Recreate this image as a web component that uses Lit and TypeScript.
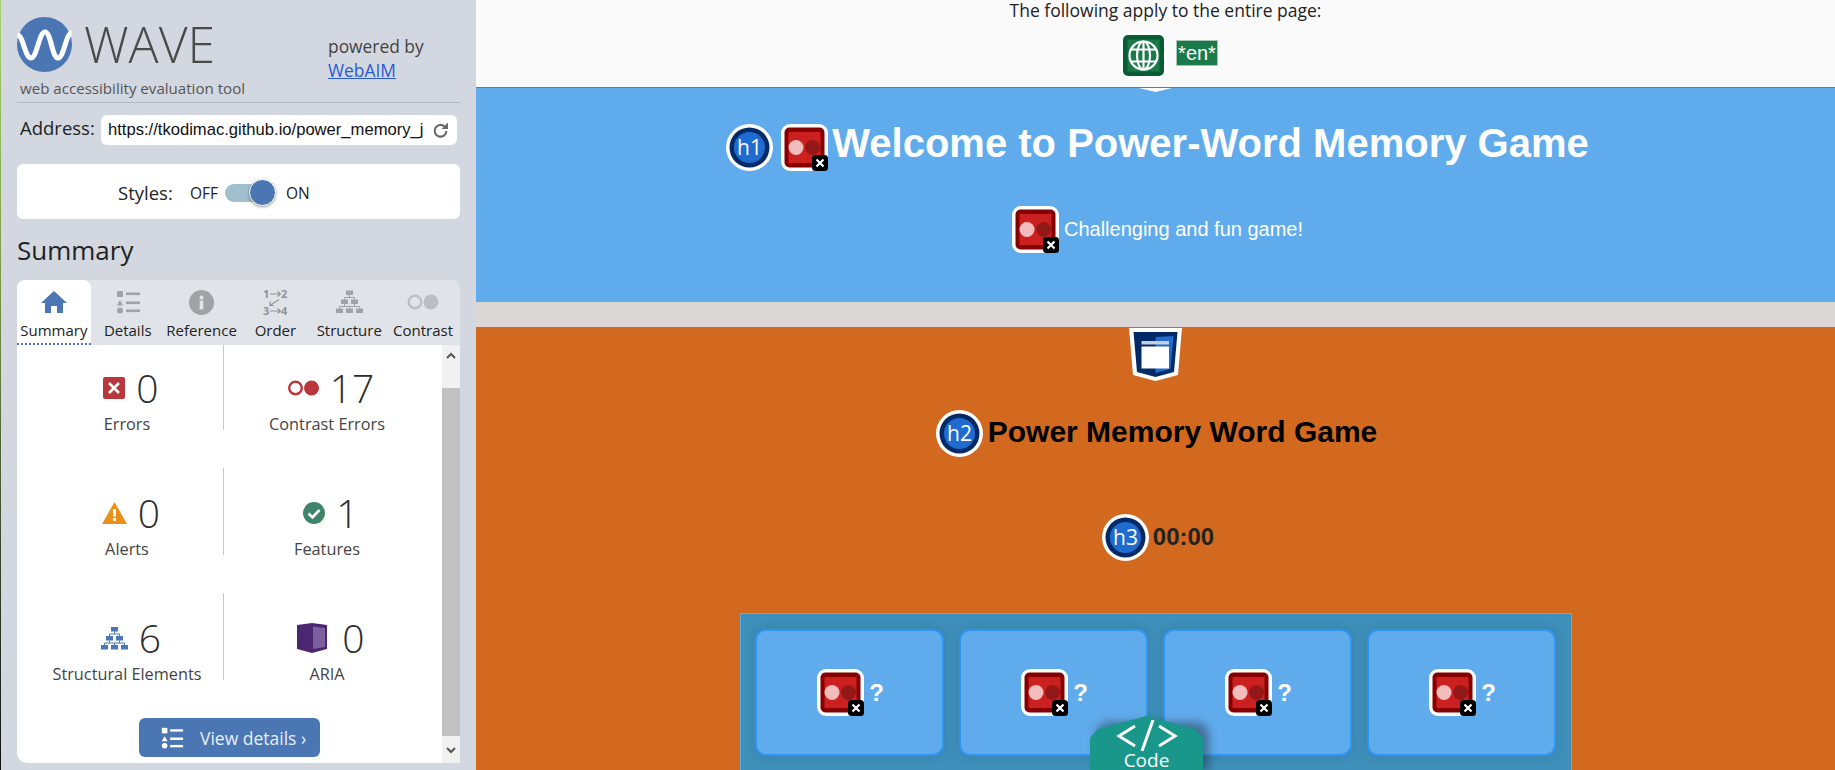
import { LitElement, html, css, svg } from 'lit';
import { customElement } from 'lit/decorators.js';

const redIcon = html`<svg class="wi" width="47" height="47" viewBox="0 0 47 47">
  <rect width="47" height="47" rx="9" fill="#fff"/>
  <rect x="3.5" y="3.5" width="40" height="40" rx="5" fill="#870000"/>
  <rect x="7.5" y="8" width="32" height="31" fill="#cc2020"/>
  <circle cx="15" cy="23.5" r="7.5" fill="#f0bcbc"/>
  <circle cx="31.5" cy="23.5" r="7.5" fill="#941818"/>
  <rect x="31" y="31" width="16" height="16" rx="3.5" fill="#000"/>
  <path d="M35.5 35.5l7 7M42.5 35.5l-7 7" stroke="#fff" stroke-width="2.2"/>
</svg>`;

const headingIcon = (label: string) => html`<svg class="wi" width="47" height="47" viewBox="0 0 47 47">
  <circle cx="23.5" cy="23.5" r="23.5" fill="#fff"/>
  <circle cx="23.5" cy="23.5" r="20" fill="#022a66"/>
  <circle cx="23.5" cy="23.5" r="15.5" fill="#1f6bd0"/>
  <text x="23.5" y="31" text-anchor="middle" font-family="Open Sans" font-size="21" fill="#fff">${label}</text>
</svg>`;

const structureIcon = (c: string) => svg`
  <rect x="10" y="0" width="7" height="4.5" fill="${c}"/>
  <rect x="5" y="9" width="7" height="4.5" fill="${c}"/>
  <rect x="15" y="9" width="7" height="4.5" fill="${c}"/>
  <rect x="0" y="18" width="7" height="4.5" fill="${c}"/>
  <rect x="10" y="18" width="7" height="4.5" fill="${c}"/>
  <rect x="20" y="18" width="7" height="4.5" fill="${c}"/>
  <path d="M13.5 4v3M8.5 9V7h10v2M8.5 13.5V16M18.5 13.5V16M3.5 18v-2h20v2M13.5 16v2" stroke="${c}" stroke-width="1" fill="none"/>`;

const listIcon = (c: string) => svg`
  <rect x="2" y="1" width="6" height="6" fill="${c}"/>
  <path d="M5 10l3.2 5.5H1.8z" fill="${c}"/>
  <circle cx="5" cy="20.5" r="3" fill="${c}"/>
  <rect x="11" y="2.5" width="14" height="2.6" fill="${c}"/>
  <rect x="11" y="11.5" width="14" height="2.6" fill="${c}"/>
  <rect x="11" y="19.5" width="14" height="2.6" fill="${c}"/>`;

const tabs = [
  { label: 'Summary', active: true, icon: html`<svg width="26" height="22" viewBox="0 0 26 22"><path d="M13 0L26 12h-4v10h-6v-7h-6v7H4V12H0z" fill="#4a76b4"/></svg>` },
  { label: 'Details', icon: html`<svg width="26" height="24" viewBox="0 0 26 24">${listIcon('#a0a3a6')}</svg>` },
  { label: 'Reference', icon: html`<svg width="25" height="25" viewBox="0 0 25 25"><circle cx="12.5" cy="12.5" r="12.5" fill="#a0a3a6"/><circle cx="12.5" cy="7.5" r="2" fill="#e0e3e8"/><rect x="10.7" y="10.5" width="3.6" height="9" fill="#e0e3e8"/></svg>` },
  { label: 'Order', icon: html`<svg width="32" height="30" viewBox="0 0 32 30"><g font-family="Open Sans" font-size="11" font-weight="700" fill="#8f9296"><text x="4" y="11">1</text><text x="22" y="11">2</text><text x="4" y="28">3</text><text x="22" y="28">4</text></g><path d="M11 7h10M18.500 4.500L21.500 7l-3 2.500M11 24h10M18.500 21.500L21.500 24l-3 2.500M20 12.500l-9 6M11 14.500V18.500h4" stroke="#8f9296" stroke-width="1.100" fill="none"/></svg>` },
  { label: 'Structure', icon: html`<svg width="27" height="24" viewBox="0 0 27 23">${structureIcon('#a0a3a6')}</svg>` },
  { label: 'Contrast', icon: html`<svg width="32" height="16" viewBox="0 0 32 16"><circle cx="8" cy="8" r="6.300" fill="none" stroke="#bcbfc2" stroke-width="2.400"/><circle cx="24" cy="8" r="7.500" fill="#bcbfc2"/></svg>` },
];

const stats = [
  { n: '0', label: 'Errors', icon: html`<svg width="22" height="22" viewBox="0 0 22 22"><rect width="22" height="22" rx="2" fill="#b9363b"/><path d="M6 6l10 10M16 6L6 16" stroke="#fff" stroke-width="2.600"/></svg>` },
  { n: '17', label: 'Contrast Errors', icon: html`<svg width="31" height="16" viewBox="0 0 31 16"><circle cx="7.500" cy="8" r="6.300" fill="none" stroke="#b9363b" stroke-width="2.400"/><circle cx="23.500" cy="8" r="7.500" fill="#b9363b"/></svg>` },
  { n: '0', label: 'Alerts', icon: html`<svg width="25" height="22" viewBox="0 0 25 22"><path d="M12.500 0L25 22H0z" fill="#e8901a"/><rect x="11" y="7" width="3" height="7.500" fill="#fff"/><rect x="11" y="16" width="3" height="3" fill="#fff"/></svg>` },
  { n: '1', label: 'Features', icon: html`<svg width="22" height="22" viewBox="0 0 22 22"><circle cx="11" cy="11" r="11" fill="#3f8468"/><path d="M5.500 11.500l4 4 7-7.500" stroke="#fff" stroke-width="2.600" fill="none"/></svg>` },
  { n: '6', label: 'Structural Elements', icon: html`<svg width="27" height="23" viewBox="0 0 27 23">${structureIcon('#4a76b4')}</svg>` },
  { n: '0', label: 'ARIA', icon: html`<svg width="34" height="30" viewBox="0 0 34 30"><path d="M0 2l15-2 15 2v24l-15 4-15-4z" fill="#4a2770"/><path d="M16 3.500l12 1.500v19l-12 2z" fill="#7d5fa0"/></svg>` },
];

const cards = [0, 1, 2, 3];

@customElement('app-root')
export class AppRoot extends LitElement {
  static styles = css`
    :host {
      display: flex;
      width: 1835px;
      height: 770px;
      overflow: hidden;
      position: relative;
      font-family: "Open Sans", sans-serif;
    }
    .edge {
      width: 1px;
      flex: none;
      background: linear-gradient(#a5d56a, #7a9c48 35%, #3c4a30 70%, #111);
    }
    .side {
      width: 475px;
      flex: none;
      background: #d3d8e0;
      padding: 0 16px;
      box-sizing: border-box;
    }
    .brand {
      height: 102px;
      display: flex;
      border-bottom: 1px solid #b5b8bc;
      box-sizing: content-box;
      position: relative;
    }
    .logo-col { width: 311px; padding-top: 17px; }
    .logo-row { display: flex; align-items: center; gap: 12px; height: 55px; }
    .wave-word {
      font-size: 50px;
      font-weight: 300;
      color: #4a4a4a;
      line-height: 55px;
    }
    .tagline { font-size: 15.100px; color: #555; margin: 6px 0 0 3px; line-height: 20px; }
    .powered { padding-top: 34px; font-size: 17.400px; line-height: 24px; color: #444; }
    .powered a { color: #2a5bd0; text-decoration: underline; display: block; }
    .address { display: flex; align-items: center; height: 30px; margin-top: 12px; padding-left: 3px; }
    .address label { font-size: 18.500px; color: #222; width: 81px; line-height: 26px; padding-bottom: 4px; white-space: nowrap; }
    .url {
      width: 356px;
      height: 30px;
      background: #fff;
      border-radius: 6px;
      display: flex;
      align-items: center;
      justify-content: space-between;
      padding: 0 8px 0 7px;
      box-sizing: border-box;
    }
    .url span {
      font: 16.600px/20px "Liberation Sans", sans-serif;
      color: #111;
      width: 315px;
      overflow: hidden;
      white-space: nowrap;
      padding-bottom: 1px;
    }
    .styles {
      height: 55px;
      margin-top: 19px;
      background: #fff;
      border-radius: 6px;
      display: flex;
      align-items: center;
      padding: 2px 0 0 101px;
      box-sizing: border-box;
      color: #222;
    }
    .styles b { font-weight: 400; font-size: 18.500px; width: 72px; }
    .styles small { font-size: 15.500px; }
    .track {
      width: 40px;
      height: 18px;
      border-radius: 9px;
      background: #9fc0cc;
      margin: 0 21px 0 7px;
      position: relative;
    }
    .knob {
      position: absolute;
      right: -11px;
      top: -4.500px;
      width: 25px;
      height: 25px;
      border-radius: 50%;
      background: #4a76b4;
      border: 1px solid #fff;
      box-shadow: 0 1px 3px rgba(0, 0, 0, 0.4);
    }
    h2 {
      font-size: 26px;
      font-weight: 400;
      color: #222;
      margin: 0;
      height: 61px;
      line-height: 62px;
    }
    .tabs {
      height: 65px;
      display: grid;
      grid-template-columns: repeat(6, 1fr);
      background: #e0e3e8;
      border-radius: 8px 8px 0 0;
    }
    .tab {
      display: flex;
      flex-direction: column;
      align-items: center;
      font-size: 15px;
      color: #222;
      box-sizing: border-box;
      border-radius: 8px 8px 0 0;
    }
    .tab.active { background: #fff; border-bottom: 2px dotted #4a76b4; }
    .tab-icon { height: 40px; display: flex; align-items: center; justify-content: center; padding-top: 4px; box-sizing: border-box; }
    .tab-label { line-height: 20px; white-space: nowrap; }
    .panel {
      height: 418px;
      background: #fff;
      border-radius: 0 0 0 10px;
      display: flex;
      overflow: hidden;
    }
    .panel-main { width: 425px; display: flex; flex-direction: column; }
    .stats {
      display: grid;
      grid-template-columns: 207px 218px;
      grid-auto-rows: 87px;
      row-gap: 38px;
      margin-top: -2px;
    }
    .stat { display: flex; flex-direction: column; align-items: center; padding-top: 20px; box-sizing: border-box; }
    .stat:nth-child(odd) { border-right: 1px solid #c8c8c8; padding-left: 14px; }
    .stat:nth-child(even) { padding-right: 12px; }
    .stat-top { display: flex; align-items: center; gap: 11px; height: 50px; padding-left: 8px; }
    .num { font-size: 39px; font-weight: 300; color: #2c2c2c; line-height: 50px; }
    .stat-label { font-size: 16.300px; color: #444; line-height: 22px; white-space: nowrap; }
    .view {
      align-self: flex-start;
      margin: 38px 0 0 122px;
      width: 181px;
      height: 39px;
      background: #4a76b4;
      border-radius: 6px;
      color: #e8eef6;
      font-size: 17.500px;
      display: flex;
      align-items: center;
      padding-left: 21px;
      gap: 16px;
      box-sizing: border-box;
    }
    .scroll { width: 18px; display: flex; flex-direction: column; background: #f1f1f1; }
    .scroll-btn { height: 43px; display: flex; justify-content: center; padding-top: 7px; box-sizing: border-box; }
    .scroll-btn.down { height: 27px; padding-top: 11px; }
    .thumb { flex: 1; background: #c1c1c1; }
    .page { flex: 1; display: flex; flex-direction: column; min-width: 0; }
    .apply {
      height: 87px;
      background: #fafafa;
      border-bottom: 1px solid #777;
      display: flex;
      flex-direction: column;
      align-items: center;
      font-size: 17.500px;
      color: #222;
      line-height: 21px;
      flex: none;
      padding-left: 20px;
    }
    .apply-row { display: flex; align-items: center; gap: 9px; margin-top: 11px; padding-left: 7px; }
    .lang {
      background: #1a7a4a;
      border: 1px solid #a9c6b5;
      color: #fff;
      font: 20px/24px "Liberation Sans", sans-serif;
      padding: 0 1px;
      margin-bottom: 6px;
    }
    .hero {
      height: 214px;
      flex: none;
      background: #60abeb;
      display: flex;
      flex-direction: column;
      align-items: center;
      position: relative;
      color: #fff;
      font-family: "Liberation Sans", sans-serif;
    }
    .notch {
      position: absolute;
      top: 0;
      left: 663px;
      width: 33px;
      height: 4px;
      background: #fff;
      clip-path: polygon(0 0, 100% 0, 50% 100%);
    }
    .row { display: flex; align-items: center; }
    .wi { flex: none; }
    h1 { margin: 0 0 0 -4px; font-size: 40px; font-weight: 700; line-height: 38px; padding-bottom: 9px; }
    .h1-row { margin-top: 36px; padding-left: 4px; gap: 8px; }
    .sub-row { margin-top: 35px; font-size: 20px; gap: 5px; padding-left: 4px; }
    .gap { height: 25px; flex: none; background: #dcd7d7; }
    .game {
      flex: 1;
      background: #d2691e;
      display: flex;
      flex-direction: column;
      align-items: center;
      font-family: "Liberation Sans", sans-serif;
      min-height: 0;
    }
    .landmark { margin-top: 1px; flex: none; }
    .game h3 { margin: 0; font-size: 30px; font-weight: 700; color: #000; line-height: 34px; padding-bottom: 4px; }
    .h2-row { margin-top: 29px; gap: 5px; padding-left: 2px; }
    .h3-row { margin-top: 57px; gap: 4px; padding-left: 5px; }
    .timer { font-size: 24px; font-weight: 700; color: #222; line-height: 28px; padding-bottom: 2px; }
    .board {
      margin-top: 52px;
      width: 832px;
      flex: 1;
      min-height: 0;
      box-sizing: border-box;
      background: #3e8fb9;
      border: 1px solid #60abeb;
      border-bottom: 0;
      padding: 15px 14px 0;
      display: grid;
      grid-template-columns: repeat(4, 189px);
      column-gap: 15px;
      align-content: start;
    }
    .card {
      height: 127px;
      box-sizing: border-box;
      background: #60abeb;
      border: 2px solid #2e96f0;
      border-radius: 11px;
      display: flex;
      align-items: center;
      justify-content: center;
      gap: 5px;
      color: #fff;
      font-size: 24px;
      font-weight: 700;
      padding-left: 3px;
      box-shadow: 0 0 8px rgba(40, 100, 150, 0.35);
    }
    .code {
      position: absolute;
      left: 1090px;
      top: 716px;
      width: 113px;
      height: 54px;
      background: #18978a;
      clip-path: polygon(50% 0, 93% 13px, 100% 22px, 100% 100%, 0 100%, 0 22px, 7% 13px);
      color: #fff;
      text-align: center;
      font-size: 19px;
    }
    .code-shadow {
      position: absolute;
      left: 1096px;
      top: 722px;
      width: 113px;
      height: 48px;
      background: rgba(30, 40, 50, 0.45);
      filter: blur(4px);
      border-radius: 14px 14px 0 0;
    }
    .code svg { display: block; margin: 4px auto 0; }
    .code span { display: block; line-height: 19px; }
  `;

  render() {
    return html`
      <div class="edge"></div>
      <aside class="side">
        <div class="brand">
          <div class="logo-col">
            <div class="logo-row">
              <svg width="55" height="55" viewBox="0 0 55 55">
                <circle cx="27.500" cy="27.500" r="27.500" fill="#4a76b4"/>
                <path d="M0.500 18C6 18 8 41 14 41S22 15 28 15S35 41 41 41S49 16 54.500 16" fill="none" stroke="#fff" stroke-width="5"/>
              </svg>
              <span class="wave-word">WAVE</span>
            </div>
            <div class="tagline">web accessibility evaluation tool</div>
          </div>
          <div class="powered">powered by<a>WebAIM</a></div>
        </div>
        <div class="address">
          <label>Address:</label>
          <div class="url">
            <span>https://tkodimac.github.io/power_memory_j</span>
            <svg width="17" height="17" viewBox="0 0 16 16"><path d="M13.500 8.500a5.500 5.500 0 1 1-1.800-4.300" fill="none" stroke="#666" stroke-width="2"/><path d="M15 0.500v6h-6z" fill="#666"/></svg>
          </div>
        </div>
        <div class="styles">
          <b>Styles:</b><small>OFF</small>
          <div class="track"><div class="knob"></div></div>
          <small>ON</small>
        </div>
        <h2>Summary</h2>
        <div class="tabs">
          ${tabs.map(t => html`
            <div class="tab ${t.active ? 'active' : ''}">
              <div class="tab-icon">${t.icon}</div>
              <div class="tab-label">${t.label}</div>
            </div>
          `)}
        </div>
        <div class="panel">
          <div class="panel-main">
            <div class="stats">
              ${stats.map(s => html`
                <div class="stat">
                  <div class="stat-top">${s.icon}<span class="num">${s.n}</span></div>
                  <div class="stat-label">${s.label}</div>
                </div>
              `)}
            </div>
            <div class="view">
              <svg width="24" height="24" viewBox="0 0 26 24">${listIcon('#fff')}</svg>
              <span>View details ›</span>
            </div>
          </div>
          <div class="scroll">
            <div class="scroll-btn"><svg width="10" height="7" viewBox="0 0 10 7"><path d="M1 6l4-4 4 4" fill="none" stroke="#555" stroke-width="2"/></svg></div>
            <div class="thumb"></div>
            <div class="scroll-btn down"><svg width="10" height="7" viewBox="0 0 10 7"><path d="M1 1l4 4 4-4" fill="none" stroke="#555" stroke-width="2"/></svg></div>
          </div>
        </div>
      </aside>
      <main class="page">
        <div class="apply">
          <div>The following apply to the entire page:</div>
          <div class="apply-row">
            <svg class="wi" width="47" height="47" viewBox="0 0 47 47">
              <rect width="47" height="47" rx="9" fill="#fff"/>
              <rect x="3" y="3" width="41" height="41" rx="5" fill="#0a5c35"/>
              <rect x="7.500" y="7.500" width="32" height="32" fill="#1a7a4a"/>
              <g fill="none" stroke="#fff" stroke-width="2.200">
                <circle cx="23.500" cy="23.500" r="14"/>
                <ellipse cx="23.500" cy="23.500" rx="6.500" ry="14"/>
                <path d="M23.500 9.500v28M11 17.500h25M11 29.500h25"/>
              </g>
            </svg>
            <span class="lang">*en*</span>
          </div>
        </div>
        <section class="hero">
          <div class="notch"></div>
          <div class="row h1-row">
            ${headingIcon('h1')}
            ${redIcon}
            <h1>Welcome to Power-Word Memory Game</h1>
          </div>
          <div class="row sub-row">
            ${redIcon}
            <span>Challenging and fun game!</span>
          </div>
        </section>
        <div class="gap"></div>
        <section class="game">
          <svg class="landmark" width="53" height="53" viewBox="0 0 53 53">
            <path d="M0 0h53l-4 47-22.500 6L4 47z" fill="#fff"/>
            <path d="M4.500 4h44l-3.500 40-18.500 5L8 44z" fill="#022a66"/>
            <path d="M26.500 9l18-1-3 33-15 4z" fill="#1f6bd0"/>
            <rect x="12.500" y="13" width="27.500" height="3.500" fill="#c4cfdf"/>
            <rect x="12.500" y="18.500" width="27.500" height="22" fill="#fff"/>
          </svg>
          <div class="row h2-row">
            ${headingIcon('h2')}
            <h3>Power Memory Word Game</h3>
          </div>
          <div class="row h3-row">
            ${headingIcon('h3')}
            <span class="timer">00:00</span>
          </div>
          <div class="board">
            ${cards.map(() => html`<div class="card">${redIcon}<span>?</span></div>`)}
          </div>
        </section>
      </main>
      <div class="code-shadow"></div>
      <div class="code">
        <svg width="62" height="31" viewBox="0 0 62 31">
          <path d="M19 6L3 16l16 10M43 6l16 10-16 10M37 0L26 31" fill="none" stroke="#fff" stroke-width="3"/>
        </svg>
        <span>Code</span>
      </div>
    `;
  }
}
